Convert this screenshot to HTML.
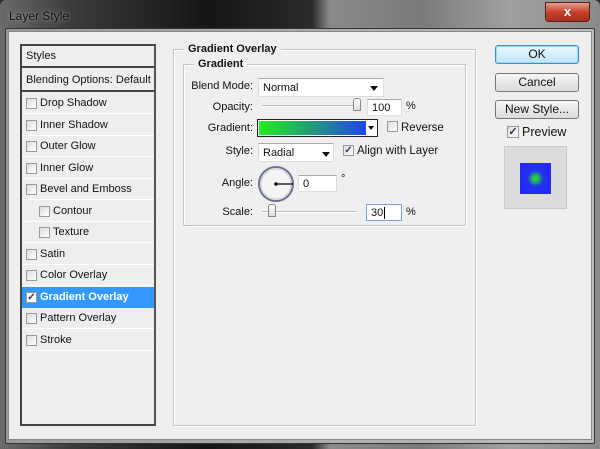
<!DOCTYPE html>
<html><head><meta charset="utf-8"><style>
*{margin:0;padding:0;box-sizing:border-box}
body{width:600px;height:449px;overflow:hidden;background:#2a2a2a;font-family:"Liberation Sans",sans-serif;font-size:11px;color:#111;position:relative}
.a{position:absolute}
.title{left:0;top:0;width:600px;height:449px;background:linear-gradient(90deg,#6a6a6a 0,#3a3a3a 12%,#151515 35%,#2a2a2a 52%,#8a8a8a 55%,#7a7a7a 70%,#a0a0a0 85%,#8a8a8a 100%);border-radius:6px 6px 0 0}
.frame{left:5px;top:28px;width:590px;height:416px;border:1px solid #333;background:linear-gradient(90deg,#9a9a9a,#bdbdbd);border-radius:2px}
.client{left:8px;top:31px;width:584px;height:409px;background:#efefef;border:1px solid #888}
.list{left:20px;top:44px;width:136px;height:382px;border:2px solid #444;border-right-color:#555;background:#eee}
.row{position:absolute;left:0;width:132px;height:21px;border-bottom:1px solid #fff;line-height:20px}
.cb{position:absolute;width:11px;height:11px;border:1px solid #999;background:linear-gradient(135deg,#ddd,#fff);top:5px}
.fs{border:1px solid #c4c4c4;box-shadow:1px 1px 0 #fff inset,1px 1px 0 #fff}
.leg{background:#efefef;font-weight:bold;padding:0 4px;font-size:11px}
.inp{background:#fff;border:1px solid #ddd;border-top-color:#aaa;height:17px;line-height:16px;padding-left:4px}
.btn{border:1px solid #777;border-radius:3px;background:linear-gradient(#f6f6f6,#dcdcdc);text-align:center;font-size:12px;line-height:17px;height:19px}
.lbl{text-align:right;width:80px}
.sl{height:2px;background:#bbb;border-bottom:1px solid #fff}
.thumb{width:8px;height:13px;border:1px solid #888;border-radius:3px 3px 1px 1px;background:linear-gradient(#fff,#ddd)}
.arr{width:0;height:0;border-left:4px solid transparent;border-right:4px solid transparent;border-top:5px solid #111}
</style></head><body>
<div class="a title"></div>
<div class="a frame"></div>
<div class="a" style="left:9px;top:9px;color:#111;font-size:12px;text-shadow:0 0 5px rgba(255,255,255,.6)">Layer Style</div>
<div class="a" style="left:545px;top:2px;width:45px;height:20px;border-radius:0 0 4px 4px;border:1px solid #5a1d14;background:linear-gradient(#e8a090,#c4412c 50%,#a8301e);color:#fff;font-weight:bold;text-align:center;line-height:18px;font-size:13px">x</div>
<div class="a client"></div>
<div class="a list">
<div class="row" style="top:0;height:22px;border-bottom:2px solid #444;padding-left:4px;line-height:21px">Styles</div>
<div class="row" style="top:23px;height:23px;border-bottom:2px solid #444;padding-left:4px;line-height:22px">Blending Options: Default</div>
<div class="row" style="top:47px"><span class="cb" style="left:4px"></span><span style="position:absolute;left:18px">Drop Shadow</span></div>
<div class="row" style="top:68.5px"><span class="cb" style="left:4px"></span><span style="position:absolute;left:18px">Inner Shadow</span></div>
<div class="row" style="top:90px"><span class="cb" style="left:4px"></span><span style="position:absolute;left:18px">Outer Glow</span></div>
<div class="row" style="top:111.5px"><span class="cb" style="left:4px"></span><span style="position:absolute;left:18px">Inner Glow</span></div>
<div class="row" style="top:133px"><span class="cb" style="left:4px"></span><span style="position:absolute;left:18px">Bevel and Emboss</span></div>
<div class="row" style="top:154.5px"><span class="cb" style="left:17px"></span><span style="position:absolute;left:31px">Contour</span></div>
<div class="row" style="top:176px"><span class="cb" style="left:17px"></span><span style="position:absolute;left:31px">Texture</span></div>
<div class="row" style="top:197.5px"><span class="cb" style="left:4px"></span><span style="position:absolute;left:18px">Satin</span></div>
<div class="row" style="top:219px"><span class="cb" style="left:4px"></span><span style="position:absolute;left:18px">Color Overlay</span></div>
<div class="row" style="top:240.5px;background:#3399ff;color:#fff;font-weight:bold;border-bottom-color:#3399ff"><span class="cb" style="left:4px;background:#fff;color:#335;font-size:10px;line-height:9px;text-align:center;font-weight:bold">✓</span><span style="position:absolute;left:18px">Gradient Overlay</span></div>
<div class="row" style="top:262px"><span class="cb" style="left:4px"></span><span style="position:absolute;left:18px">Pattern Overlay</span></div>
<div class="row" style="top:283.5px"><span class="cb" style="left:4px"></span><span style="position:absolute;left:18px">Stroke</span></div>
</div>
<div class="a fs" style="left:173px;top:49px;width:303px;height:377px"></div>
<div class="a leg" style="left:184px;top:43px">Gradient Overlay</div>
<div class="a fs" style="left:183px;top:64px;width:283px;height:162px"></div>
<div class="a leg" style="left:194px;top:58px">Gradient</div>
<div class="a lbl" style="left:173px;top:80px">Blend Mode:</div>
<div class="a inp" style="left:258px;top:78px;width:126px;height:19px;line-height:19px">Normal</div>
<div class="a arr" style="left:370px;top:86px"></div>
<div class="a lbl" style="left:173px;top:101px">Opacity:</div>
<div class="a sl" style="left:262px;top:105px;width:98px"></div>
<div class="a thumb" style="left:353px;top:98px"></div>
<div class="a inp" style="left:367px;top:99px;width:35px">100</div>
<div class="a" style="left:406px;top:100px">%</div>
<div class="a lbl" style="left:173px;top:122px">Gradient:</div>
<div class="a" style="left:257px;top:119px;width:121px;height:18px;border:1px solid #222;background:#fff"></div>
<div class="a" style="left:259px;top:121px;width:107px;height:14px;background:linear-gradient(90deg,#22ee22,#22aa66 40%,#2244ee)"></div>
<div class="a arr" style="left:368px;top:126px;border-left-width:3px;border-right-width:3px;border-top-width:4px"></div>
<div class="a cb" style="left:387px;top:121px"></div>
<div class="a" style="left:401px;top:122px;font-size:11.5px">Reverse</div>
<div class="a lbl" style="left:173px;top:145px">Style:</div>
<div class="a inp" style="left:258px;top:143px;width:76px;height:19px;line-height:19px">Radial</div>
<div class="a arr" style="left:322px;top:152px"></div>
<div class="a cb" style="left:343px;top:145px;font-size:10px;line-height:9px;text-align:center;color:#335;font-weight:bold">✓</div>
<div class="a" style="left:357px;top:145px;font-size:11.5px">Align with Layer</div>
<div class="a lbl" style="left:173px;top:177px">Angle:</div>
<svg class="a" style="left:256px;top:164px" width="40" height="40"><circle cx="20" cy="20" r="17" fill="#f4f4f4" stroke="#6b7390" stroke-width="2"/><circle cx="20" cy="20" r="15" fill="none" stroke="#ccc"/><line x1="20" y1="20" x2="37" y2="20" stroke="#000" stroke-width="1.3"/><circle cx="20" cy="20" r="1.8" fill="#000"/></svg>
<div class="a inp" style="left:298px;top:175px;width:39px">0</div>
<div class="a" style="left:341px;top:173px">°</div>
<div class="a lbl" style="left:173px;top:206px">Scale:</div>
<div class="a sl" style="left:262px;top:211px;width:94px"></div>
<div class="a thumb" style="left:268px;top:204px"></div>
<div class="a inp" style="left:366px;top:204px;width:36px;border:1px solid #7aa7d8">30<span style="border-left:1px solid #000;margin-left:1px"></span></div>
<div class="a" style="left:406px;top:206px">%</div>
<div class="a btn" style="left:495px;top:45px;width:84px;border-color:#3b8fc6;background:linear-gradient(#eaf6fd,#bee6fd);box-shadow:0 0 0 1px #9fd8f6 inset">OK</div>
<div class="a btn" style="left:495px;top:73px;width:84px">Cancel</div>
<div class="a btn" style="left:495px;top:100px;width:84px">New Style...</div>
<div class="a cb" style="left:507px;top:126px;width:12px;height:12px;font-size:11px;line-height:10px;text-align:center;color:#335;font-weight:bold">✓</div>
<div class="a" style="left:522px;top:125px;font-size:12.5px">Preview</div>
<div class="a" style="left:504px;top:146px;width:63px;height:63px;background:#dcdcdc;border:1px solid #c8c8c8"></div>
<div class="a" style="left:520px;top:163px;width:31px;height:31px;background:radial-gradient(circle at 50% 50%,#22dd33 0,#22bb55 3px,#2233ee 8px,#2222ff 100%)"></div>
</body></html>
